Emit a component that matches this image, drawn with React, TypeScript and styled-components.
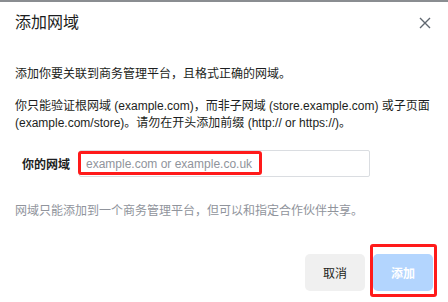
import React from 'react'
import styled, { createGlobalStyle } from 'styled-components'

const GlobalStyle = createGlobalStyle`
  html, body {
    margin: 0;
    padding: 0;
    background: #fff;
  }
  body {
    font-family: "Liberation Sans", Arial, "Noto Sans CJK SC", sans-serif;
    color: #1c1e21;
  }
`

const Dialog = styled.div`
  width: 448px;
  height: 302px;
  box-sizing: border-box;
  border-top: 2px solid #8a8d91;
  background: #fff;
  display: flex;
  flex-direction: column;
  overflow: hidden;
`

const Header = styled.div`
  display: flex;
  justify-content: space-between;
  align-items: center;
  padding: 10px 17px 0 15px;
  height: 22px;
`

const Title = styled.h2`
  margin: 0;
  font-size: 16px;
  font-weight: normal;
  line-height: 22px;
  color: #1c1e21;
`

const CloseButton = styled.button`
  border: none;
  background: none;
  padding: 0;
  width: 12px;
  height: 12px;
  display: flex;
  cursor: pointer;
`

const Body = styled.div`
  padding: 0 15px;
  display: flex;
  flex-direction: column;
`

const Text = styled.p`
  margin: ${({ $top }: { $top: number }) => `${$top}px 0 0 0`};
  font-size: 12px;
  line-height: 17px;
  color: #1c1e21;
`

const Hint = styled.p`
  margin: 26px 0 0 0;
  font-size: 12px;
  line-height: 17px;
  color: #90949c;
`

const FieldRow = styled.div`
  display: flex;
  align-items: center;
  margin-top: 18px;
  padding-left: 7px;
`

const Label = styled.label`
  font-size: 12px;
  font-weight: bold;
  color: #1c1e21;
  width: 57px;
`

const InputWrap = styled.div`
  position: relative;
  width: 291px;
`

const Input = styled.input`
  width: 100%;
  height: 27px;
  box-sizing: border-box;
  border: 1px solid #dadde1;
  border-radius: 2px;
  padding: 0 6px;
  font-family: inherit;
  font-size: 12px;
  color: #1c1e21;
  outline: none;

  &::placeholder {
    color: #90949c;
  }
`

const Highlight = styled.div`
  position: absolute;
  border: 3px solid #ff1a1a;
  border-radius: 3px;
  pointer-events: none;
  ${({ $box }: { $box: string }) => $box}
`

const Footer = styled.div`
  margin-top: auto;
  padding: 0 15px 11px 0;
  display: flex;
  justify-content: flex-end;
  gap: 8px;
`

const Button = styled.button`
  position: relative;
  width: 60px;
  height: 37px;
  border: none;
  border-radius: 5px;
  font-family: inherit;
  font-size: 12px;
  cursor: pointer;
  ${({ $primary }: { $primary?: boolean }) =>
    $primary
      ? `background: #b3d5fe; color: #fff; font-weight: bold;`
      : `background: #f0f0f0; color: #1c1e21;`}
`

function App() {
  return (
    <>
      <GlobalStyle />
      <Dialog>
        <Header>
          <Title>添加网域</Title>
          <CloseButton aria-label="关闭">
            <svg width="12" height="12" viewBox="0 0 12 12">
              <path d="M1 1L11 11M11 1L1 11" stroke="#606770" strokeWidth="1.4" />
            </svg>
          </CloseButton>
        </Header>
        <Body>
          <Text $top={32}>添加你要关联到商务管理平台，且格式正确的网域。</Text>
          <Text $top={15}>
            你只能验证根网域 (example.com)，而非子网域 (store.example.com) 或子页面
            (example.com/store)。请勿在开头添加前缀 (http:// or https://)。
          </Text>
          <FieldRow>
            <Label>你的网域</Label>
            <InputWrap>
              <Input placeholder="example.com or example.co.uk" />
              <Highlight $box="left: -1px; top: 1px; width: 178px; height: 18px;" />
            </InputWrap>
          </FieldRow>
          <Hint>网域只能添加到一个商务管理平台，但可以和指定合作伙伴共享。</Hint>
        </Body>
        <Footer>
          <Button>取消</Button>
          <Button $primary>
            添加
            <Highlight $box="left: -3px; right: -4px; top: -10px; bottom: -6px;" />
          </Button>
        </Footer>
      </Dialog>
    </>
  )
}

export default App
